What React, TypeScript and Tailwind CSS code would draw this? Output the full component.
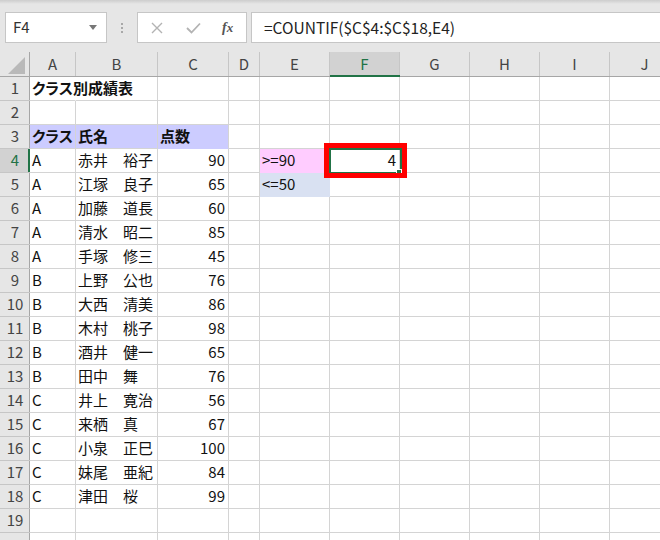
import React from 'react';

const FONT = "font-['Noto_Sans_CJK_JP','Noto_Sans',sans-serif]";

// column widths incl. right gridline
const COLS = [
    { key: 'A', w: 'w-[46px]' },
    { key: 'B', w: 'w-[82px]' },
    { key: 'C', w: 'w-[71px]' },
    { key: 'D', w: 'w-[31px]' },
    { key: 'E', w: 'w-[70px]' },
    { key: 'F', w: 'w-[70px]' },
    { key: 'G', w: 'w-[70px]' },
    { key: 'H', w: 'w-[70px]' },
    { key: 'I', w: 'w-[70px]' },
    { key: 'J', w: 'w-[70px]' },
];

const DATA: [string, string, number][] = [
    ['A', '赤井　裕子', 90],
    ['A', '江塚　良子', 65],
    ['A', '加藤　道長', 60],
    ['A', '清水　昭二', 85],
    ['A', '手塚　修三', 45],
    ['B', '上野　公也', 76],
    ['B', '大西　清美', 86],
    ['B', '木村　桃子', 98],
    ['B', '酒井　健一', 65],
    ['B', '田中　舞', 76],
    ['C', '井上　寛治', 56],
    ['C', '来栖　真', 67],
    ['C', '小泉　正巳', 100],
    ['C', '妹尾　亜紀', 84],
    ['C', '津田　桜', 99],
];

type Cell = { text?: string; right?: boolean; bold?: boolean; bg?: string; noRight?: boolean };

function buildRow(r: number): Record<string, Cell> {
    const row: Record<string, Cell> = {};
    if (r === 1) row.A = { text: 'クラス別成績表', bold: true, noRight: true };
    if (r === 3) {
        row.A = { text: 'クラス', bold: true, bg: 'bg-[#ccccff] border-[#ccccff]' };
        row.B = { text: '氏名', bold: true, bg: 'bg-[#ccccff] border-[#ccccff]' };
        row.C = { text: '点数', bold: true, bg: 'bg-[#ccccff] border-b-[#ccccff]' };
    }
    const d = DATA[r - 4];
    if (d) {
        row.A = { text: d[0] };
        row.B = { text: d[1] };
        row.C = { text: String(d[2]), right: true };
    }
    if (r === 4) {
        row.E = { text: '>=90', bg: 'bg-[#ffccff] border-[#ffccff]' };
        row.F = { text: '4', right: true };
    }
    if (r === 5) row.E = { text: '<=50', bg: 'bg-[#d9e1f2] border-[#d9e1f2]' };
    return row;
}

const FormulaBar: React.FC = () => (
    <div className="h-[52px] bg-[#e6e6e6]">
        <div className="h-[4px] bg-gradient-to-b from-[#cdcdcd] to-[#e6e6e6]" />
        <div className="flex items-start pt-[8px]">
            {/* Name box */}
            <div className="ml-[5px] w-[102px] h-[31px] bg-white border border-[#c6c6c6] flex items-center justify-between pl-[7px] pr-[9px]">
                <span className="text-[15px] text-[#333]">F4</span>
                <svg width="8" height="5" viewBox="0 0 8 5">
                    <path d="M0 0 L8 0 L4 5 Z" fill="#777" />
                </svg>
            </div>
            <div className="w-[30px] h-[31px] flex flex-col items-center justify-center gap-[2px]">
                <span className="w-[2px] h-[2px] bg-[#a8a8a8]" />
                <span className="w-[2px] h-[2px] bg-[#a8a8a8]" />
                <span className="w-[2px] h-[2px] bg-[#a8a8a8]" />
            </div>
            {/* cancel / enter / fx */}
            <div className="w-[110px] h-[31px] bg-white border border-[#c6c6c6] flex items-center">
                <svg className="ml-[13px]" width="12" height="12" viewBox="0 0 12 12">
                    <path d="M1 1 L11 11 M11 1 L1 11" stroke="#b3b3b3" strokeWidth="1.4" />
                </svg>
                <svg className="ml-[23px]" width="15" height="12" viewBox="0 0 15 12">
                    <path d="M1 6 L5.5 10.5 L14 1.5" stroke="#b3b3b3" strokeWidth="1.8" fill="none" />
                </svg>
                <span className="ml-[21px] text-[13px] italic font-bold text-[#555] font-['Liberation_Serif',serif] leading-none">
                    <span className="text-[14px]">f</span>x
                </span>
            </div>
            <div className="ml-[4px] flex-1 h-[31px] bg-white border border-[#c6c6c6] border-r-0 flex items-center pl-[12px]">
                <span className="text-[15.5px] text-[#222] whitespace-nowrap">=COUNTIF($C$4:$C$18,E4)</span>
            </div>
        </div>
    </div>
);

const HeaderRow: React.FC = () => (
    <div className="flex h-[25px] border-b border-[#a6a6a6] bg-[#e6e6e6]">
        <div className="w-[30px] shrink-0 border-r border-[#a6a6a6] relative">
            <svg className="absolute left-[8px] top-[5px]" width="17" height="17" viewBox="0 0 17 17">
                <path d="M17 0 L17 17 L0 17 Z" fill="#b9b9b9" />
            </svg>
        </div>
        {COLS.map((c) =>
            c.key === 'F' ? (
                <div
                    key={c.key}
                    className={`${c.w} shrink-0 bg-[#d2d2d2] border-r border-[#c6c6c6] relative flex items-center justify-center text-[15px] text-[#217346]`}
                >
                    {c.key}
                    <div className="absolute left-0 right-[-1px] bottom-[-1px] h-[2px] bg-[#217346]" />
                </div>
            ) : (
                <div
                    key={c.key}
                    className={`${c.w} shrink-0 border-r border-[#c6c6c6] flex items-center justify-center text-[15px] text-[#444]`}
                >
                    {c.key}
                </div>
            )
        )}
    </div>
);

const SheetRow: React.FC<{ r: number; label?: boolean }> = ({ r, label = true }) => {
    const cells = buildRow(r);
    const selected = r === 4;
    return (
        <div className="flex h-[24px]">
            <div
                className={`w-[30px] shrink-0 border-b border-[#c6c6c6] flex items-center justify-center text-[15px] relative ${
                    selected ? 'bg-[#d2d2d2] text-[#217346]' : 'bg-[#e6e6e6] text-[#444]'
                }`}
            >
                {label ? r : null}
                <div className={`absolute top-0 right-0 bottom-0 ${selected ? 'w-[2px] bg-[#217346]' : 'w-px bg-[#a6a6a6]'}`} />
            </div>
            {COLS.map((c) => {
                const cell = cells[c.key] ?? {};
                return (
                    <div
                        key={c.key}
                        className={`${c.w} shrink-0 border-b border-r border-[#d4d4d4] flex items-center text-[15px] text-[#111] whitespace-nowrap ${
                            cell.right ? 'justify-end pr-[3px]' : 'pl-[2px]'
                        } ${cell.bold ? "font-bold [font-feature-settings:'palt']" : ''} ${cell.bg ?? ''} ${
                            cell.noRight ? 'border-r-white overflow-visible relative z-10' : 'overflow-hidden'
                        }`}
                    >
                        {cell.text}
                    </div>
                );
            })}
        </div>
    );
};

export default function App() {
    const rows = Array.from({ length: 19 }, (_, i) => i + 1);
    return (
        <div className={`relative w-[660px] h-[540px] overflow-hidden bg-white ${FONT}`}>
            <FormulaBar />
            <HeaderRow />
            {rows.map((r) => (
                <SheetRow key={r} r={r} />
            ))}
            <SheetRow r={20} label={false} />

            {/* active cell frame */}
            <div className="absolute left-[329px] top-[148px] w-[73px] h-[26px] border-2 border-[#217346]" />
            <div className="absolute left-[396px] top-[169px] w-[6px] h-[6px] bg-[#217346] border border-white" />
            {/* red annotation box */}
            <div className="absolute left-[324px] top-[143px] w-[83px] h-[35px] border-[5px] border-[#ff0000]" />
        </div>
    );
}
